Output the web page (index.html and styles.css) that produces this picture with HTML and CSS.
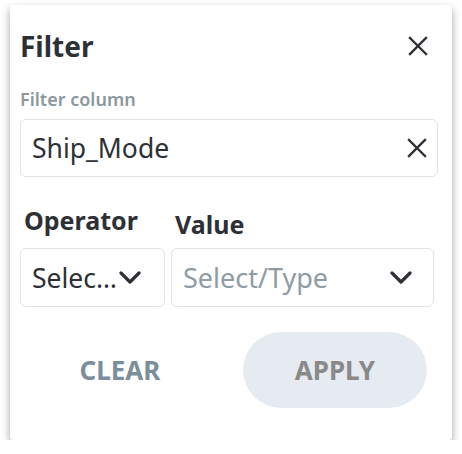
FILE: index.html
```html
<!DOCTYPE html>
<html>
<head>
<meta charset="utf-8">
<link rel="stylesheet" href="styles.css">
</head>
<body>
<div class="card">
  <div class="header">
    <div class="title">Filter</div>
    <svg class="close" width="20" height="20" viewBox="0 0 20 20"><path d="M2 2 L18 18 M18 2 L2 18" stroke="#2d3136" stroke-width="2.4" stroke-linecap="square"/></svg>
  </div>
  <div class="label">Filter column</div>
  <div class="input">
    <span class="value">Ship_Mode</span>
    <svg class="clear-x" width="20" height="20" viewBox="0 0 20 20"><path d="M2 2 L18 18 M18 2 L2 18" stroke="#2d3136" stroke-width="2.4" stroke-linecap="square"/></svg>
  </div>
  <div class="row labels">
    <div class="op-label">Operator</div>
    <div class="val-label">Value</div>
  </div>
  <div class="row selects">
    <div class="select op">
      <span class="value">Selec…</span>
      <svg class="chev" width="22" height="14" viewBox="0 0 22 14"><path d="M2 2 L11 11 L20 2" stroke="#2d3136" stroke-width="3.2" fill="none" stroke-linecap="round" stroke-linejoin="round"/></svg>
    </div>
    <div class="select val">
      <span class="placeholder">Select/Type</span>
      <svg class="chev" width="22" height="14" viewBox="0 0 22 14"><path d="M2 2 L11 11 L20 2" stroke="#2d3136" stroke-width="3.2" fill="none" stroke-linecap="round" stroke-linejoin="round"/></svg>
    </div>
  </div>
  <div class="buttons">
    <button class="btn clear">CLEAR</button>
    <button class="btn apply">APPLY</button>
  </div>
</div>
</body>
</html>
```
FILE: styles.css
```css
html, body {
  margin: 0;
  padding: 0;
  background: #ffffff;
}
body {
  font-family: "Noto Sans", "Open Sans", sans-serif;
  color: #2d3136;
}
.card {
  box-sizing: border-box;
  margin: 5px 0 0 10px;
  width: 442px;
  height: 435px;
  padding: 0 14px 0 10px;
  background: #fff;
  border-radius: 3px;
  box-shadow: 0 4px 9px rgba(0, 0, 0, 0.36);
}
.header {
  display: flex;
  align-items: center;
  justify-content: space-between;
  padding-top: 23px;
  height: 36px;
}
.title {
  font-size: 28px;
  font-weight: 700;
  line-height: 36px;
}
.close {
  margin-right: 10px;
}
.label {
  margin-top: 23px;
  font-size: 18px;
  font-weight: 600;
  line-height: 24px;
  color: #8c979e;
}
.input {
  box-sizing: border-box;
  margin-top: 8px;
  height: 58px;
  border: 1.5px solid #dde4e8;
  border-radius: 6px;
  display: flex;
  align-items: center;
  justify-content: space-between;
  padding: 0 10px 0 11px;
}
.value {
  font-size: 26.5px;
}
.row {
  display: flex;
  gap: 6px;
}
.labels {
  margin-top: 28px;
  height: 30px;
  font-size: 25px;
  font-weight: 700;
  line-height: 30px;
}
.op-label {
  width: 145px;
  padding-left: 4px;
}
.val-label {
  padding-top: 4px;
}
.selects {
  margin-top: 13px;
  height: 59px;
}
.select {
  box-sizing: border-box;
  border: 1.5px solid #dde4e8;
  border-radius: 6px;
  display: flex;
  align-items: center;
  justify-content: space-between;
}
.select.op {
  width: 145px;
  padding: 0 23px 0 11px;
}
.select.val {
  width: 263px;
  padding: 0 21px 0 11px;
}
.placeholder {
  font-size: 27px;
  color: #8e9ca6;
}
.buttons {
  margin-top: 25px;
  display: flex;
  justify-content: flex-end;
  gap: 31px;
  padding-right: 11px;
}
.btn {
  width: 184px;
  height: 76px;
  border: none;
  border-radius: 38px;
  font-family: "Noto Sans", "Open Sans", sans-serif;
  font-size: 26px;
  font-weight: 700;
  background: transparent;
  padding: 0;
}
.clear {
  color: #7a8f9b;
}
.apply {
  background: #e5ebf0;
  color: #898989;
}
```
